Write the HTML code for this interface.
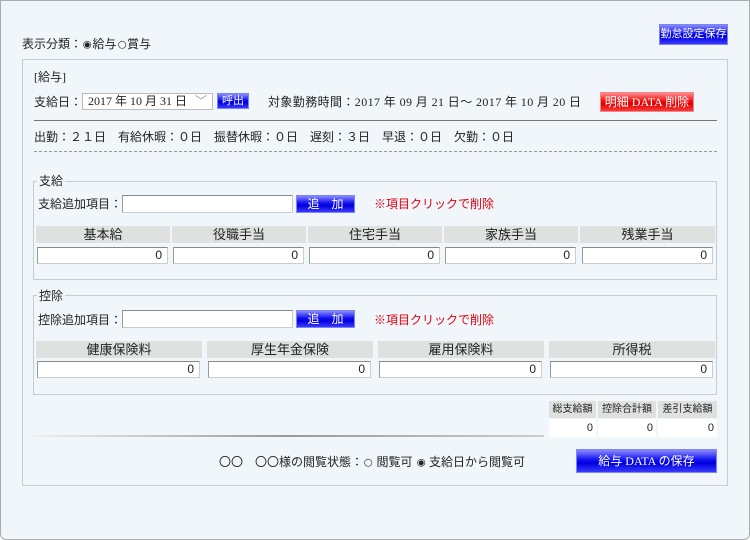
<!DOCTYPE html>
<html><head><meta charset="utf-8"><style>
*{box-sizing:border-box;margin:0;padding:0}
body{width:750px;height:540px;background:#fff;font-family:"Liberation Serif","Noto Sans CJK JP",serif;font-size:12px;color:#222;position:relative;overflow:hidden}
.frame{position:absolute;left:0;top:0;width:750px;height:540px;background:#f1f6fa;border:1px solid #a9acaf;border-radius:0 0 6px 6px}
.a{position:absolute;white-space:nowrap;line-height:14px}
.bb{position:absolute;background:linear-gradient(#8a8aff,#1010ee 45%,#0000dd 60%,#3a3aff);border:1px solid #7b86f5;color:#fff;text-align:center;font-size:12px}
.rb{position:absolute;background:linear-gradient(#ff8a8a,#ee1010 45%,#dd0000 60%,#ff3a3a);border:1px solid #f08a8a;color:#fff;text-align:center;font-size:12px}
.box{position:absolute;border:1px solid #c6ccd2}
.inp{position:absolute;background:#fff;border:1px solid #999;border-right-color:#ccc;border-bottom-color:#ccc;border-top-color:#888;text-align:right;padding-right:5px;font-size:12px;line-height:14px;font-family:"Liberation Sans",sans-serif}
.hd{position:absolute;background:#dfe0e0;text-align:center;font-size:13px;line-height:17px}
.red{color:#e00010}
.sh{position:absolute;background:#dfe0e0;text-align:center;font-size:10px;line-height:17px}
.sv{position:absolute;background:#fff;text-align:right;padding-right:3px;font-size:11px;line-height:18px;font-family:"Liberation Sans",sans-serif}
.r{font-size:12px;font-family:"DejaVu Sans",sans-serif;display:inline-block;transform:scale(0.85)}
</style></head><body>
<div class="frame"></div>
<div class="a" style="left:22px;top:37px">表示分類：<span class="r">◉</span>給与<span class="r">○</span>賞与</div>
<div class="bb" style="left:659px;top:24px;width:69px;height:21px;line-height:19px;font-size:11px">勤怠設定保存</div>
<div class="box" style="left:22px;top:59px;width:706px;height:427px"></div>
<div class="a" style="left:34px;top:70px">[給与]</div>
<div class="a" style="left:34px;top:95px">支給日：</div>
<div class="inp" style="left:82px;top:93px;width:131px;height:17px;text-align:left;padding-left:5px;border-color:#bbb;font-family:'Liberation Serif','Noto Sans CJK JP',serif">2017 年 10 月 31 日 <span style="position:absolute;right:5px;color:#999">﹀</span></div>
<div class="bb" style="left:217px;top:93px;width:32px;height:16px;line-height:14px;font-size:11px">呼出</div>
<div class="a" style="left:268px;top:95px;letter-spacing:0.4px">対象勤務時間：2017 年 09 月 21 日～ 2017 年 10 月 20 日</div>
<div class="rb" style="left:600px;top:92px;width:94px;height:20px;line-height:18px">明細 DATA 削除</div>
<div style="position:absolute;left:34px;top:120px;width:683px;height:1px;background:#777"></div>
<div class="a" style="left:34px;top:130px">出勤：２１日　有給休暇：０日　振替休暇：０日　遅刻：３日　早退：０日　欠勤：０日</div>
<div style="position:absolute;left:34px;top:151px;width:683px;border-top:1px dashed #999"></div>

<div class="box" style="left:33px;top:181px;width:684px;height:99px"></div>
<div class="a" style="left:37px;top:174px;background:#f1f6fa;padding:0 2px">支給</div>
<div class="a" style="left:38px;top:197px">支給追加項目：</div>
<div class="inp" style="left:122px;top:195px;width:171px;height:18px"></div>
<div class="bb" style="left:296px;top:195px;width:59px;height:18px;line-height:16px">追　加</div>
<div class="a red" style="left:374px;top:197px">※項目クリックで削除</div>
<div class="hd" style="left:36px;top:226px;width:134px">基本給</div>
<div class="hd" style="left:172px;top:226px;width:134px">役職手当</div>
<div class="hd" style="left:308px;top:226px;width:134px">住宅手当</div>
<div class="hd" style="left:444px;top:226px;width:134px">家族手当</div>
<div class="hd" style="left:580px;top:226px;width:135px">残業手当</div>
<div class="inp" style="left:37px;top:247px;width:131px;height:17px">0</div>
<div class="inp" style="left:173px;top:247px;width:131px;height:17px">0</div>
<div class="inp" style="left:309px;top:247px;width:131px;height:17px">0</div>
<div class="inp" style="left:445px;top:247px;width:131px;height:17px">0</div>
<div class="inp" style="left:582px;top:247px;width:131px;height:17px">0</div>

<div class="box" style="left:33px;top:295px;width:684px;height:100px"></div>
<div class="a" style="left:37px;top:289px;background:#f1f6fa;padding:0 2px">控除</div>
<div class="a" style="left:38px;top:313px">控除追加項目：</div>
<div class="inp" style="left:122px;top:310px;width:171px;height:18px"></div>
<div class="bb" style="left:296px;top:310px;width:59px;height:18px;line-height:16px">追　加</div>
<div class="a red" style="left:374px;top:313px">※項目クリックで削除</div>
<div class="hd" style="left:36px;top:341px;width:166px">健康保険料</div>
<div class="hd" style="left:207px;top:341px;width:166px">厚生年金保険</div>
<div class="hd" style="left:378px;top:341px;width:166px">雇用保険料</div>
<div class="hd" style="left:549px;top:341px;width:166px">所得税</div>
<div class="inp" style="left:37px;top:361px;width:163px;height:17px">0</div>
<div class="inp" style="left:208px;top:361px;width:163px;height:17px">0</div>
<div class="inp" style="left:379px;top:361px;width:163px;height:17px">0</div>
<div class="inp" style="left:550px;top:361px;width:163px;height:17px">0</div>

<div class="sh" style="left:549px;top:401px;width:47px">総支給額</div>
<div class="sh" style="left:598px;top:401px;width:58px">控除合計額</div>
<div class="sh" style="left:658px;top:401px;width:59px">差引支給額</div>
<div class="sv" style="left:549px;top:419px;width:47px">0</div>
<div class="sv" style="left:598px;top:419px;width:58px">0</div>
<div class="sv" style="left:658px;top:419px;width:59px">0</div>
<div style="position:absolute;left:30px;top:435px;width:514px;height:2px;background:linear-gradient(90deg,#eef0f2,#999 50%,#ccc)"></div>

<div class="a" style="left:219px;top:455px">〇〇　〇〇様の閲覧状態：<span class="r">○</span> 閲覧可 <span class="r">◉</span> 支給日から閲覧可</div>
<div class="bb" style="left:576px;top:449px;width:141px;height:24px;line-height:22px">給与 DATA の保存</div>
</body></html>
